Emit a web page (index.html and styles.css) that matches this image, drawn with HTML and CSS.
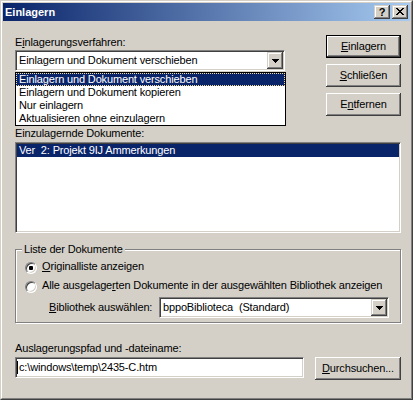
FILE: index.html
```html
<!DOCTYPE html>
<html lang="de">
<head>
<meta charset="utf-8">
<title>Einlagern</title>
<link rel="stylesheet" href="styles.css">
</head>
<body>
<div class="window">
  <div class="frame">
    <div class="titlebar">
      <span class="title">Einlagern</span>
      <div class="tbtns">
        <span class="tbtn q">?</span>
        <span class="tbtn">
          <svg width="8" height="7" viewBox="0 0 8 7" shape-rendering="crispEdges"><path d="M0 0h2v1h-2zM6 0h2v1h-2zM1 1h2v1h-2zM5 1h2v1h-2zM2 2h4v1h-4zM3 3h2v1h-2zM2 4h4v1h-4zM1 5h2v1h-2zM5 5h2v1h-2zM0 6h2v1h-2zM6 6h2v1h-2z" fill="#000"/></svg>
        </span>
      </div>
    </div>
    <div class="content">
      <div class="toprow">
        <div class="leftcol">
          <div class="label first">E<u>i</u>nlagerungsverfahren:</div>
          <div class="combo">
            <span class="combo-text">Einlagern und Dokument verschieben</span>
            <span class="arrow"><svg width="7" height="4" viewBox="0 0 7 4" shape-rendering="crispEdges"><path d="M0 0h7v1h-1v1h-1v1h-1v1h-1v-1h-1v-1h-1v-1h-1z" fill="#000"/></svg></span>
          </div>
          <ul class="droplist">
            <li class="item sel">Einlagern und Dokument verschieben</li>
            <li class="item">Einlagern und Dokument kopieren</li>
            <li class="item">Nur einlagern</li>
            <li class="item">Aktualisieren ohne einzulagern</li>
          </ul>
        </div>
        <div class="btncol">
          <button class="btn default"><u>E</u>inlagern</button>
          <button class="btn"><u>S</u>chließen</button>
          <button class="btn">E<u>n</u>tfernen</button>
        </div>
      </div>
      <div class="label docs">Einzulagernde Dokumente:</div>
      <div class="listbox">
        <div class="lrow sel">Ver  2: Projekt 9IJ Ammerkungen</div>
      </div>
      <fieldset class="group">
        <legend class="legend">Liste der Dokumente</legend>
        <div class="radio-row r1"><span class="radio checked"></span><span><u>O</u>riginalliste anzeigen</span></div>
        <div class="radio-row r2"><span class="radio"></span><span>Alle ausgelage<u>r</u>ten Dokumente in der ausgewählten Bibliothek anzeigen</span></div>
        <div class="lib-row">
          <span class="lib-label"><u>B</u>ibliothek auswählen:</span>
          <div class="combo lib">
            <span class="combo-text">bppoBiblioteca  (Standard)</span>
            <span class="arrow"><svg width="7" height="4" viewBox="0 0 7 4" shape-rendering="crispEdges"><path d="M0 0h7v1h-1v1h-1v1h-1v1h-1v-1h-1v-1h-1v-1h-1z" fill="#000"/></svg></span>
          </div>
        </div>
      </fieldset>
      <div class="label path">Auslagerungspfad und -dateiname:</div>
      <div class="path-row">
        <div class="input"><span class="caret"></span><span class="input-text">c:\windows\temp\2435-C.htm</span></div>
        <button class="btn browse"><u>D</u>urchsuchen...</button>
      </div>
    </div>
  </div>
</div>
</body>
</html>
```
FILE: styles.css
```css
* { box-sizing: border-box; }
body {
  margin: 0;
  font: 11px/13px "Liberation Sans", Arial, sans-serif;
  letter-spacing: -0.15px;
  color: #000;
  background: #d4d0c8;
}
u { text-decoration: underline; text-underline-offset: 1px; }

.window {
  width: 413px;
  height: 400px;
  border: 1px solid;
  border-color: #d4d0c8 #404040 #404040 #d4d0c8;
  background: #d4d0c8;
}
.frame {
  height: 100%;
  border: 1px solid;
  border-color: #fff #808080 #808080 #fff;
  padding: 1px;
  display: flex;
  flex-direction: column;
}

.titlebar {
  height: 18px;
  flex: none;
  background: linear-gradient(to right, #0a246a, #a6caf0);
  display: flex;
  align-items: center;
  justify-content: space-between;
  padding: 0 2px;
}
.title { color: #fff; font-weight: bold; letter-spacing: 0; }
.tbtns { display: flex; gap: 2px; }
.tbtn {
  width: 16px;
  height: 14px;
  background: #d4d0c8;
  box-shadow: inset -1px -1px #404040, inset 1px 1px #d4d0c8, inset -2px -2px #808080, inset 2px 2px #fff;
  display: flex;
  align-items: center;
  justify-content: center;
  padding-bottom: 1px;
}
.tbtn.q { font-weight: bold; font-size: 11px; line-height: 11px; padding-bottom: 0; letter-spacing: 0; }

.content {
  flex: 1;
  padding: 14px 9px 0 12px;
  display: flex;
  flex-direction: column;
}

.toprow {
  display: flex;
  justify-content: space-between;
  align-items: flex-start;
}
.leftcol { position: relative; width: 270px; }
.label { height: 13px; white-space: pre; }
.label.first { margin-top: 1px; }

.combo {
  width: 270px;
  height: 21px;
  margin-top: 1px;
  border: 1px solid;
  border-color: #808080 #fff #fff #808080;
  box-shadow: inset 1px 1px #404040, inset -1px -1px #d4d0c8;
  padding: 1px;
  background: #fff;
  display: flex;
  align-items: center;
}
.combo-text { flex: 1; padding-left: 2px; white-space: pre; }
.arrow {
  width: 16px;
  height: 17px;
  background: #d4d0c8;
  box-shadow: inset -1px -1px #404040, inset 1px 1px #d4d0c8, inset -2px -2px #808080, inset 2px 2px #fff;
  display: flex;
  align-items: center;
  justify-content: center;
}

.droplist {
  position: absolute;
  left: 0;
  top: 37px;
  width: 271px;
  margin: 0;
  padding: 0;
  list-style: none;
  background: #fff;
  border: 1px solid #000;
}
.item { height: 13px; padding-left: 3px; white-space: pre; }
.item.sel {
  background: #0a246a;
  color: #fff;
  border: 1px dotted #f2dc98;
  padding-left: 2px;
  line-height: 11px;
}

.btncol {
  width: 75px;
  display: flex;
  flex-direction: column;
  gap: 6px;
}
.btn {
  width: 75px;
  height: 23px;
  margin: 0;
  padding: 0;
  font: inherit;
  letter-spacing: inherit;
  color: #000;
  background: #d4d0c8;
  border: none;
  box-shadow: inset -1px -1px #404040, inset 1px 1px #fff, inset -2px -2px #808080, inset 2px 2px #d4d0c8;
  text-align: center;
}
.btn.default {
  border: 1px solid #000;
}

.label.docs { margin-top: 11px; }
.listbox {
  margin-top: 2px;
  height: 91px;
  border: 1px solid;
  border-color: #808080 #fff #fff #808080;
  box-shadow: inset 1px 1px #404040, inset -1px -1px #d4d0c8;
  padding: 1px;
  background: #fff;
}
.lrow { height: 13px; padding-left: 2px; white-space: pre; }
.lrow.sel { background: #0a246a; color: #fff; }

.group {
  margin: 10px 0 0 0;
  min-width: 0;
  padding: 0 9px 4px 9px;
  border: 1px solid #808080;
  box-shadow: inset 1px 1px #fff, 1px 1px #fff;
}
.legend {
  margin-left: -3px;
  padding: 0 2px;
  height: 13px;
  background: #d4d0c8;
}
.radio-row { display: flex; align-items: flex-start; height: 13px; white-space: pre; }
.radio-row.r1 { margin-top: 4px; }
.radio-row.r2 { margin-top: 6px; }
.radio {
  width: 12px;
  height: 12px;
  margin-top: 2px;
  margin-right: 5px;
  border-radius: 50%;
  border: 1px solid;
  border-color: #808080 #fff #fff #808080;
  box-shadow: inset 1px 1px #404040, inset -1px -1px #d4d0c8;
  background: #fff;
  display: flex;
  align-items: center;
  justify-content: center;
  flex: none;
}
.radio.checked::after {
  content: "";
  width: 4px;
  height: 4px;
  border-radius: 1px;
  background: #000;
}
.lib-row {
  margin-top: 5px;
  display: flex;
  align-items: center;
  padding-left: 24px;
}
.lib-label { width: 110px; white-space: pre; }
.combo.lib { width: 230px; margin-top: 0; }

.label.path { margin-top: 19px; }
.path-row {
  margin-top: 2px;
  display: flex;
  justify-content: space-between;
  align-items: flex-start;
}
.input {
  width: 289px;
  height: 21px;
  border: 1px solid;
  border-color: #808080 #fff #fff #808080;
  box-shadow: inset 1px 1px #404040, inset -1px -1px #d4d0c8;
  padding: 1px;
  background: #fff;
  display: flex;
  align-items: center;
}
.caret { width: 1px; height: 13px; background: #000; margin-right: 1px; }
.input-text { white-space: pre; }
.btn.browse { width: 86px; }
```
